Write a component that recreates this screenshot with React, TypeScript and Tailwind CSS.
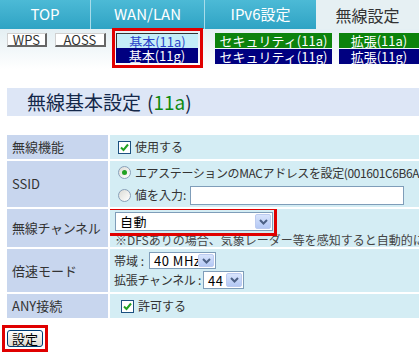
import React from "react";

const font = { fontFamily: '"MS UI Gothic", "Noto Sans CJK JP", "Liberation Sans", sans-serif' };

function CheckBox() {
  return (
    <span className="inline-flex w-[13px] h-[13px] border border-[#1c5180] bg-white items-center justify-center shrink-0">
      <svg width="9" height="9" viewBox="0 0 9 9">
        <path d="M1 4.5 L3.5 7 L8 1.5" stroke="#21a121" strokeWidth="2" fill="none" />
      </svg>
    </span>
  );
}

function Radio({ checked }: { checked?: boolean }) {
  return (
    <span className="inline-flex w-[13px] h-[13px] rounded-full border border-[#8aa0b8] bg-gradient-to-br from-[#dcdcd6] to-white items-center justify-center shrink-0">
      {checked && <span className="w-[5px] h-[5px] rounded-full bg-[#21a121]" />}
    </span>
  );
}

function Select({ value, width }: { value: string; width: string }) {
  return (
    <span className={`inline-flex items-center h-full border border-[#7f9db9] bg-white shrink-0 ${width}`}>
      <span className="flex-1 pl-[4px] text-[13px] text-black tracking-[0.5px] leading-none whitespace-nowrap overflow-hidden">{value}</span>
      <span className="w-[16px] h-[calc(100%-2px)] mr-[1px] bg-gradient-to-b from-[#d8e4fc] to-[#b4c8f4] border border-[#bccbf0] rounded-[2px] flex items-center justify-center shrink-0">
        <svg width="9" height="6" viewBox="0 0 9 6">
          <path d="M1 1 L4.5 4.5 L8 1" stroke="#4d6185" strokeWidth="2" fill="none" />
        </svg>
      </span>
    </span>
  );
}

function SubBtn({ label, tone, width }: { label: string; tone: "green" | "navy" | "light"; width: string }) {
  const cls =
    tone === "green"
      ? "bg-[#0c830c] text-white"
      : tone === "navy"
      ? "bg-[#000080] text-white"
      : "bg-[#c4eef8] text-[#2a44c8] border-t border-l border-[#333]";
  return (
    <div className={`h-[15px] ${width} ${cls} flex items-center justify-center text-[13px] leading-[15px] whitespace-nowrap overflow-hidden`}>
      {label}
    </div>
  );
}

export default function App() {
  return (
    <div className="w-[419px] h-[353px] overflow-hidden bg-white" style={font}>
      {/* Tabs */}
      <div className="flex h-[29px] bg-gradient-to-b from-[#4cbad6] to-[#2ea3c4] text-white text-[15px]">
        <div className="w-[91px] flex items-center justify-center border-r border-[#a8dcea]">TOP</div>
        <div className="w-[114px] flex items-center justify-center border-r border-[#a8dcea]">WAN/LAN</div>
        <div className="w-[111px] flex items-center justify-center">IPv6設定</div>
        <div className="flex-1 flex items-center justify-center bg-[#e6f0f3] text-[#333] text-[16px]">無線設定</div>
      </div>

      {/* Sub menu */}
      <div className="flex items-start h-[40px] bg-gradient-to-b from-[#e4eff3] to-white">
        <div className="ml-[7px] mt-[4px] w-[43px] h-[14px] bg-white border-t border-l border-[#d0d0d0] border-r-2 border-b-2 border-r-[#666] border-b-[#666] flex items-center justify-center text-[13px] text-[#333] leading-none">
          WPS
        </div>
        <div className="ml-[8px] mt-[4px] w-[55px] h-[14px] bg-white border-t border-l border-[#d0d0d0] border-r-2 border-b-2 border-r-[#666] border-b-[#666] flex items-center justify-center text-[13px] text-[#333] leading-none">
          AOSS
        </div>
        <div className="ml-[6px] -mt-[1px] border-[3px] border-[#e00000] pt-[2px] pb-[2px] pl-[1px] pr-[2px] flex flex-col">
          <SubBtn label="基本(11a)" tone="light" width="w-[82px]" />
          <SubBtn label="基本(11g)" tone="navy" width="w-[82px]" />
        </div>
        <div className="ml-[12px] mt-[4px] flex flex-col gap-[1px]">
          <SubBtn label="セキュリティ(11a)" tone="green" width="w-[117px]" />
          <SubBtn label="セキュリティ(11g)" tone="navy" width="w-[117px]" />
        </div>
        <div className="ml-[7px] mt-[4px] flex flex-col gap-[1px]">
          <SubBtn label="拡張(11a)" tone="green" width="w-[80px]" />
          <SubBtn label="拡張(11g)" tone="navy" width="w-[80px]" />
        </div>
      </div>

      {/* Title */}
      <div className="ml-[7px] mt-[19px] h-[28px] bg-[#dde6f6] flex items-center pl-[20px] text-[19px] text-[#14284a] whitespace-nowrap">
        無線基本設定 <span className="ml-[6px]">(</span>
        <span className="text-[#0f8a0f]">11a</span>
        <span>)</span>
      </div>

      {/* Table */}
      <div className="ml-[7px] mt-[19px] grid grid-cols-[101px_1fr] gap-[2px] text-[#333] whitespace-nowrap">
        <div className="h-[24px] bg-[#c8d6ee] flex items-center pl-[5px] text-[13px]">無線機能</div>
        <div className="h-[24px] bg-[#d4edf4] flex items-center gap-[4px] pl-[8px] text-[12px]">
          <CheckBox />
          <span>使用する</span>
        </div>

        <div className="h-[46px] bg-[#c8d6ee] flex items-center pl-[5px] text-[13px]">SSID</div>
        <div className="h-[46px] bg-[#d4edf4] flex flex-col justify-center gap-[4px] pl-[8px] text-[12px] overflow-hidden">
          <div className="flex items-center gap-[4px]">
            <Radio checked />
            <span className="tracking-[-0.4px]">エアステーションのMACアドレスを設定(001601C6B6AA)</span>
          </div>
          <div className="flex items-center gap-[4px]">
            <Radio />
            <span>値を入力:</span>
            <span className="w-[214px] h-[19px] bg-white border border-[#7f9db9]" />
          </div>
        </div>

        <div className="h-[38px] bg-[#c8d6ee] flex items-center pl-[5px] text-[13px] tracking-[-0.3px]">無線チャンネル</div>
        <div className="h-[38px] bg-[#d4edf4] pl-[5px] pt-[3px] text-[12px] overflow-hidden">
          <div className="relative h-[19px] w-[158px]">
            <Select value="自動" width="w-[158px]" />
            <span className="absolute -left-[8px] -right-[4px] -top-[5px] -bottom-[5px] border-[3px] border-[#e00000]" />
          </div>
          <div className="mt-[2px] leading-[13px] text-[#444]">※DFSありの場合、気象レーダー等を感知すると自動的にチャンネルを変更します</div>
        </div>

        <div className="h-[43px] bg-[#c8d6ee] flex items-center pl-[5px] text-[13px]">倍速モード</div>
        <div className="h-[43px] bg-[#d4edf4] pl-[4px] flex flex-col justify-center gap-[2px] text-[12px]">
          <div className="flex items-center h-[17px]">
            <span className="w-[35px]">帯域 :</span>
            <Select value="40 MHz" width="w-[67px]" />
          </div>
          <div className="flex items-center h-[18px]">
            <span className="w-[89px] tracking-[-0.3px]">拡張チャンネル :</span>
            <Select value="44" width="w-[41px]" />
          </div>
        </div>

        <div className="h-[24px] bg-[#c8d6ee] flex items-center pl-[5px] text-[13px]">ANY接続</div>
        <div className="h-[24px] bg-[#d4edf4] flex items-center gap-[4px] pl-[11px] text-[12px]">
          <CheckBox />
          <span>許可する</span>
        </div>
      </div>

      {/* Submit */}
      <div className="ml-[2px] mt-[7px] inline-flex border-[3px] border-[#e00000] p-[2px]">
        <button className="w-[36px] h-[17px] border border-[#003c74] rounded-[3px] bg-gradient-to-b from-white to-[#dcdad0] text-[13px] text-black leading-none flex items-center justify-center">
          設定
        </button>
      </div>
    </div>
  );
}
